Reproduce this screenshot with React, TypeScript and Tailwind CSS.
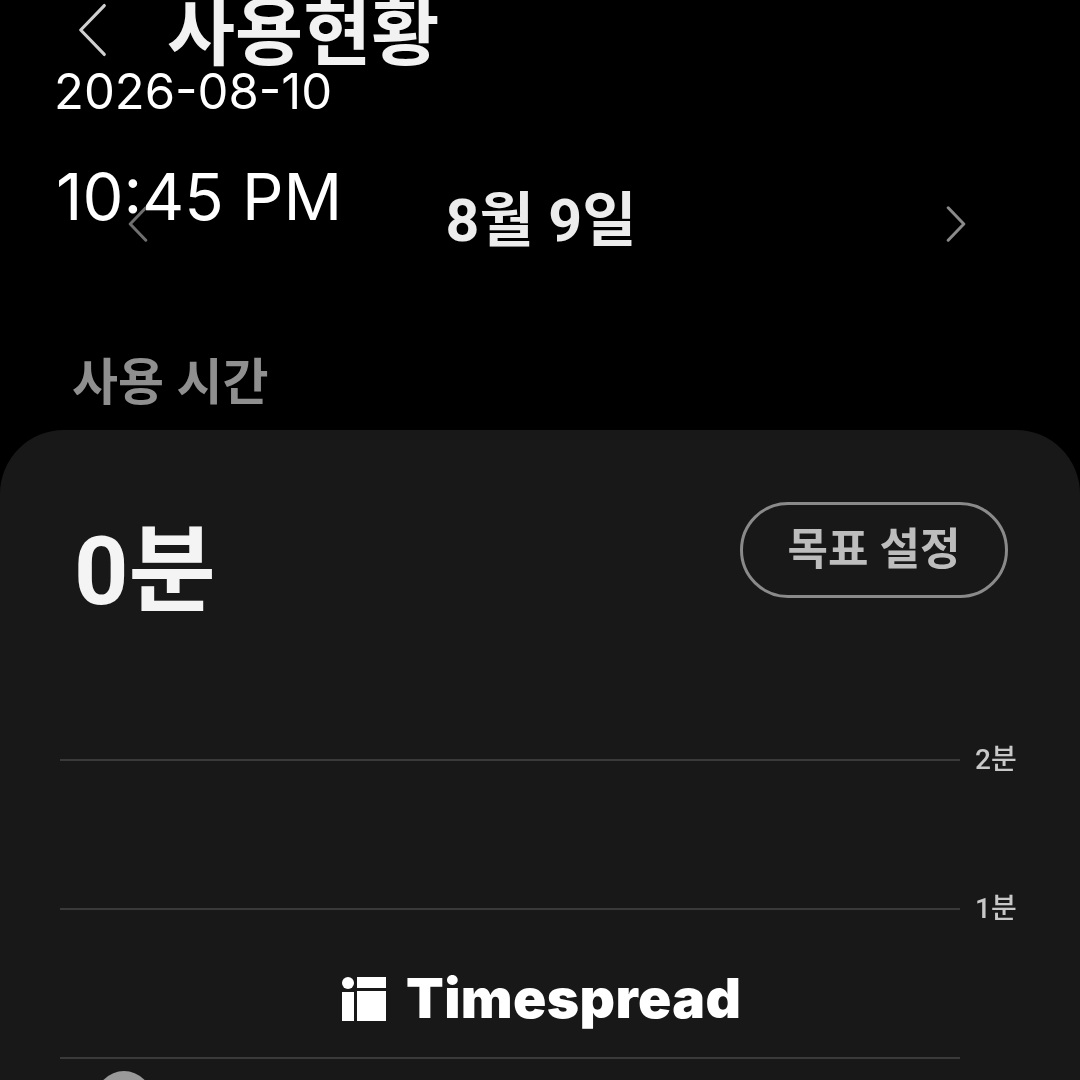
import React from 'react';

const cjk = 'font-["Roboto","Noto_Sans_CJK_KR",sans-serif]';

const Chevron: React.FC<{ dir: 'left' | 'right'; className: string; stroke: string; width?: number }> = ({ dir, className, stroke, width = 3.5 }) => (
  <svg viewBox="0 0 32 60" className={className} fill="none" stroke={stroke} strokeWidth={width} strokeLinecap="round" strokeLinejoin="round">
    <path d={dir === 'left' ? 'M29 3 L3 30 L29 57' : 'M3 3 L29 30 L3 57'} />
  </svg>
);

const GridLine: React.FC<{ label?: string }> = ({ label }) => (
  <div className="flex items-center h-[30px]">
    <div className="w-[900px] h-[2px] bg-[#3a3a3a]" />
    {label && <span className="ml-[15px] text-[28px] font-medium text-[#c8c8c8] leading-none">{label}</span>}
  </div>
);

const App: React.FC = () => {
  return (
    <div className={`relative w-[1080px] h-[1080px] overflow-hidden bg-black text-white ${cjk}`}>
      <div className="blur-[0.7px]">
        {/* Header */}
        <div className="flex items-center h-[68px] pl-[78px]">
          <Chevron dir="left" stroke="#d0d0d0" className="w-[29px] h-[56px] mb-[8px]" />
          <h1 className="ml-[60px] text-[74px] font-bold leading-none text-[#f2f2f2] whitespace-nowrap">사용현황</h1>
        </div>

        {/* Date nav */}
        <div className="flex items-center justify-between h-[80px] mt-[112px] pl-[128px] pr-[114px]">
          <Chevron dir="left" stroke="#6f6f6f" width={5} className="w-[20px] h-[36px] mt-[8px]" />
          <span className="ml-[-12px] text-[59px] font-bold leading-none text-[#ececec]">8월 9일</span>
          <Chevron dir="right" stroke="#8a8a8a" width={5} className="w-[20px] h-[36px] mt-[8px]" />
        </div>

        <div className="mt-[98px] pl-[72px] h-[64px] text-[50px] font-bold leading-none text-[#8f8f8f]">사용 시간</div>

        {/* Card */}
        <div className="mt-[8px] h-[700px] rounded-t-[64px] bg-[#181818] pl-[60px]">
          <div className="flex items-start justify-between pr-[72px] pt-[72px]">
            <span className="ml-[14px] mt-[14px] text-[95px] font-bold leading-[112px] text-[#f4f4f4]">0분</span>
            <button className="w-[268px] h-[96px] rounded-full border-[3px] border-[#8a8a8a] text-[44px] font-bold text-[#bdbdbd] leading-none">
              목표 설정
            </button>
          </div>
          <div className="mt-[117px] flex flex-col gap-[119px]">
            <GridLine label="2분" />
            <GridLine label="1분" />
          </div>
          <div className="mt-[119px]">
            <GridLine />
          </div>
          <div className="ml-[36px] mt-[-2px] w-[56px] h-[56px] rounded-full bg-[#9a9a9a]" />
        </div>
      </div>

      {/* Timestamp overlay */}
      <div className="absolute left-[54px] top-[63px] font-['Inter',sans-serif] text-white">
        <div className="text-[49px] leading-[58px]">2026-08-10</div>
        <div className="ml-[2px] mt-[36px] text-[65px] leading-[80px]">10:45 PM</div>
      </div>

      {/* Watermark */}
      <div className="absolute left-[342px] top-[971px] flex items-center">
        <svg viewBox="0 0 44 44" className="w-[44px] h-[44px]" fill="#fff">
          <circle cx="6" cy="6" r="6" />
          <rect x="0" y="15" width="12" height="29" />
          <rect x="15" y="0" width="29" height="11" />
          <rect x="15" y="14" width="29" height="30" />
        </svg>
        <span className="ml-[20px] font-['Inter',sans-serif] font-black text-[55px] leading-none tracking-[0.4px] text-white">Timespread</span>
      </div>
    </div>
  );
};

export default App;
